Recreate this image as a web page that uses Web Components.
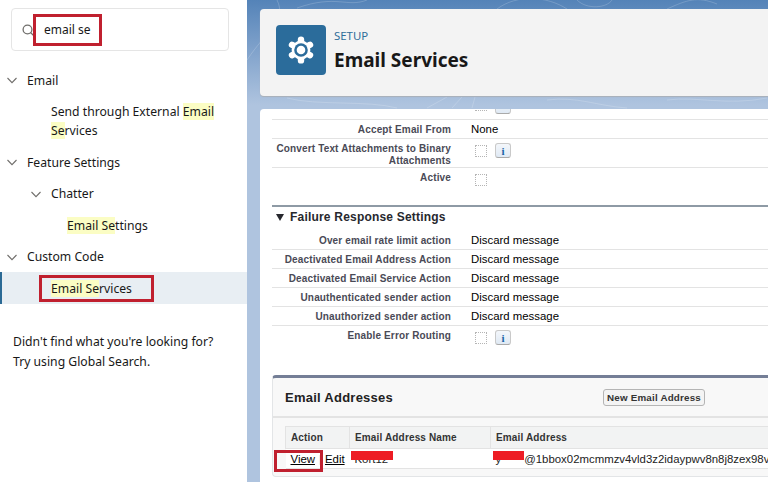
<!DOCTYPE html>
<html lang="en">
<head>
<meta charset="utf-8">
<title>Email Services</title>
<style>
    html, body { margin: 0; height: 100%; overflow: hidden; }
    body { font-family: "Noto Sans", "Liberation Sans", sans-serif; color: #181818; }
</style>
</head>
<body>
<setup-page>
    <side-nav slot="side">
        <search-box value="email se"></search-box>
        <nav-row level="0" caret>Email</nav-row>
        <nav-row level="1">Send through External <hl-text>Email</hl-text> <hl-text>Se</hl-text>rvices</nav-row>
        <nav-row level="0" caret>Feature Settings</nav-row>
        <nav-row level="1" caret>Chatter</nav-row>
        <nav-row level="2"><hl-text>Email Se</hl-text>ttings</nav-row>
        <nav-row level="0" caret>Custom Code</nav-row>
        <nav-row level="1" active><hl-text>Email Se</hl-text>rvices</nav-row>
        <nav-empty>Didn't find what you're looking for?<br>Try using Global Search.</nav-empty>
    </side-nav>
    <page-header slot="main" kicker="SETUP" title="Email Services"></page-header>
    <detail-card slot="main">
        <detail-stub></detail-stub>
        <detail-row label="Accept Email From">None</detail-row>
        <detail-row label="Convert Text Attachments to Binary Attachments"><check-box></check-box><info-btn></info-btn></detail-row>
        <detail-row label="Active" tall last><check-box></check-box></detail-row>
        <section-head>Failure Response Settings</section-head>
        <detail-row label="Over email rate limit action">Discard message</detail-row>
        <detail-row label="Deactivated Email Address Action">Discard message</detail-row>
        <detail-row label="Deactivated Email Service Action">Discard message</detail-row>
        <detail-row label="Unauthenticated sender action">Discard message</detail-row>
        <detail-row label="Unauthorized sender action">Discard message</detail-row>
        <detail-row label="Enable Error Routing" last><check-box></check-box><info-btn></info-btn></detail-row>
        <related-list></related-list>
    </detail-card>
    <red-box slot="over" style="left:33px;top:14px;width:63px;height:26px"></red-box>
    <red-box slot="over" style="left:39px;top:275px;width:109px;height:21px"></red-box>
    <red-box slot="over" style="left:274px;top:450px;width:43px;height:16px"></red-box>
</setup-page>

<script>
class SetupPage extends HTMLElement {
    constructor() {
        super();
        this.attachShadow({ mode: "open" });
        this.shadowRoot.innerHTML = `
            <style>
                :host { display: grid; grid-template-columns: 247px 1fr; width: 768px; height: 482px; overflow: hidden; position: relative; background: #fff; }
                .main { position: relative; overflow: hidden; padding: 9px 0 0 13px; background: linear-gradient(#5483b8 0, #80a2cb 50px, #afc4df 105px, #afc4df 100%); }
                .topo { position: absolute; left: 0; top: 0; }
                ::slotted(page-header), ::slotted(detail-card) { position: relative; }
            </style>
            <slot name="side"></slot>
            <div class="main">
                <svg class="topo" width="521" height="110" fill="none" stroke="#fff" stroke-opacity=".18">
                    <path d="M0 60C20 30 40 20 30 0M50 8C90 -6 100 8 120 0M250 9C270 -6 300 -4 320 9M330 0C340 10 360 8 365 0M420 9C440 0 450 -4 470 4"/>
                    <path d="M40 98C70 106 120 100 150 108M180 108L200 97M205 108L215 97M225 108L228 97M300 100C330 96 350 106 380 108M420 100C450 96 480 106 520 98"/>
                </svg>
                <slot name="main"></slot>
            </div>
            <slot name="over"></slot>
        `;
    }
}

class SideNav extends HTMLElement {
    constructor() {
        super();
        this.attachShadow({ mode: "open" });
        this.shadowRoot.innerHTML = `
            <style>
                :host { display: block; background: #fff; font-size: 12.2px; color: #181818; }
            </style>
            <slot></slot>
        `;
    }
}

class SearchBox extends HTMLElement {
    constructor() {
        super();
        this.attachShadow({ mode: "open" });
    }

    connectedCallback() {
        this.shadowRoot.innerHTML = `
            <style>
                :host { display: block; padding: 8px 18px 13px 11px; }
                .box { display: flex; align-items: center; gap: 9px; height: 41px; padding-left: 10px; border: 1px solid #e5e5e5; border-radius: 4px; }
                span { font-size: 12px; color: #181818; }
                svg { flex: none; margin-top: 2px; }
            </style>
            <div class="box">
                <svg width="13" height="13" viewBox="0 0 13 13" fill="none" stroke="#706e6b" stroke-width="1.3">
                    <circle cx="5.5" cy="5.5" r="4.4"/><path d="M8.8 8.8L12.4 12.4"/>
                </svg>
                <span>${this.getAttribute("value")}</span>
            </div>
        `;
    }
}

class NavRow extends HTMLElement {
    constructor() {
        super();
        this.attachShadow({ mode: "open" });
    }

    connectedCallback() {
        const level = Number(this.getAttribute("level"));
        const caret = this.hasAttribute("caret");
        // text sits at 27, 51, 67 depending on the depth
        const textLeft = [27, 51, 67][level];
        const active = this.hasAttribute("active");
        this.shadowRoot.innerHTML = `
            <style>
                :host { display: flex; position: relative; padding: 6.5px 20px 6px ${textLeft}px; line-height: 19px; ${active ? "background: #e8eef3; box-shadow: inset 2px 0 0 #2b6a95;" : ""} }
                svg { position: absolute; left: ${textLeft - 20}px; top: 13px; }
            </style>
            ${caret ? `<svg width="10" height="7" viewBox="0 0 10 7" fill="none" stroke="#706e6b" stroke-width="1.1"><path d="M.5 1L5 5.6L9.5 1"/></svg>` : ""}
            <div><slot></slot></div>
        `;
    }
}

class HlText extends HTMLElement {
    constructor() {
        super();
        this.attachShadow({ mode: "open" });
        // no whitespace around the slot, it would show up inside the sentence
        this.shadowRoot.innerHTML = `<style>:host { display: inline; background: #fbfdc4; }</style><slot></slot>`;
    }
}

class NavEmpty extends HTMLElement {
    constructor() {
        super();
        this.attachShadow({ mode: "open" });
        this.shadowRoot.innerHTML = `
            <style>:host { display: block; padding: 28px 13px 0; line-height: 20px; }</style>
            <slot></slot>
        `;
    }
}

class PageHeader extends HTMLElement {
    constructor() {
        super();
        this.attachShadow({ mode: "open" });
    }

    connectedCallback() {
        this.shadowRoot.innerHTML = `
            <style>
                :host { display: flex; gap: 8px; height: 87px; box-sizing: border-box; padding: 16px; margin-bottom: 13px; background: #f3f3f3; border-radius: 4px 0 0 4px; box-shadow: 0 1px 1px #a9b0b8; }
                .icon { flex: none; display: flex; align-items: center; justify-content: center; width: 50px; height: 50px; background: #2b6c9b; border-radius: 4px; }
                .kicker { margin-top: 3px; font-size: 11.4px; line-height: 16px; color: #2f6d99; }
                h1 { margin: 0; margin-top: 4px; font-size: 19px; line-height: 24px; font-weight: 700; color: #181818; }
            </style>
            <div class="icon">
                <svg width="28" height="28" viewBox="0 0 28 28">
                    <g stroke="#fff" stroke-width="6.4" stroke-linecap="round">
                        <path d="M14 14V3.600M14 14V24.400M14 14L23 8.800M14 14L23 19.200M14 14L5 8.800M14 14L5 19.200"/>
                    </g>
                    <circle cx="14" cy="14" r="9.400" fill="#fff"/>
                    <circle cx="14" cy="14" r="6.800" fill="#2b6c9b"/>
                    <circle cx="14" cy="14" r="4.300" fill="#fff"/>
                </svg>
            </div>
            <div>
                <div class="kicker">${this.getAttribute("kicker")}</div>
                <h1>${this.getAttribute("title")}</h1>
            </div>
        `;
    }
}

class DetailCard extends HTMLElement {
    constructor() {
        super();
        this.attachShadow({ mode: "open" });
        this.shadowRoot.innerHTML = `
            <style>
                :host { display: block; height: 373px; padding-left: 12px; background: #fff; border-radius: 4px 0 0 0; font-family: "Liberation Sans", Arial, sans-serif; overflow: hidden; }
            </style>
            <slot></slot>
        `;
    }
}

class DetailStub extends HTMLElement {
    constructor() {
        super();
        this.attachShadow({ mode: "open" });
        // the row scrolled under the header: only the bottom of its controls shows
        this.shadowRoot.innerHTML = `
            <style>
                :host { display: flex; align-items: flex-end; height: 10px; padding-left: 203px; border-bottom: 1px solid #e3e3e3; overflow: hidden; }
                div { display: flex; gap: 8px; margin-bottom: 5px; }
            </style>
            <div><check-box></check-box><info-btn blank></info-btn></div>
        `;
    }
}

class DetailRow extends HTMLElement {
    constructor() {
        super();
        this.attachShadow({ mode: "open" });
    }

    connectedCallback() {
        const last = this.hasAttribute("last");
        const tall = this.hasAttribute("tall");
        this.shadowRoot.innerHTML = `
            <style>
                :host { display: grid; grid-template-columns: 179px 1fr; column-gap: 20px; min-height: 18px; ${last ? "" : "border-bottom: 1px solid #e3e3e3;"} ${tall ? "height: 37px;" : ""} }
                .label { padding: 4px 0 0 2px; text-align: right; font-size: 10px; line-height: 12px; font-weight: 700; color: #4a4a56; letter-spacing: .15px; }
                .value { display: flex; align-items: flex-start; gap: 8px; padding: 3px 0 2px 0; font-size: 11.4px; line-height: 13px; color: #000; }
                ::slotted(check-box) { margin: 3px 0 0 4px; }
                ::slotted(info-btn) { margin-top: 1px; }
            </style>
            <div class="label">${this.getAttribute("label")}</div>
            <div class="value"><slot></slot></div>
        `;
    }
}

class CheckBox extends HTMLElement {
    constructor() {
        super();
        this.attachShadow({ mode: "open" });
        this.shadowRoot.innerHTML = `
            <style>:host { display: block; flex: none; width: 10px; height: 10px; border: 1px dotted #b5b5b5; }</style>
        `;
    }
}

class InfoBtn extends HTMLElement {
    constructor() {
        super();
        this.attachShadow({ mode: "open" });
        this.shadowRoot.innerHTML = `
            <style>
                :host { display: flex; flex: none; align-items: center; justify-content: center; width: 14px; height: 13px; border: 1px solid #c9c9c9; border-bottom-color: #aaa; border-radius: 3px; background: linear-gradient(#f4f7fb, #dfe9f4); font: 700 11px "Liberation Serif", serif; color: #1a64a8; }
            </style>
            ${this.hasAttribute("blank") ? "" : "i"}
        `;
    }
}

class SectionHead extends HTMLElement {
    constructor() {
        super();
        this.attachShadow({ mode: "open" });
        this.shadowRoot.innerHTML = `
            <style>
                :host { display: flex; align-items: center; gap: 6px; height: 14px; padding: 3px 0 7px 4px; border-top: 2px solid #8e9aa5; font-size: 12px; line-height: 14px; font-weight: 700; color: #27282e; letter-spacing: .2px; }
                i { width: 0; height: 0; border: 4.5px solid transparent; border-top: 7px solid #27282e; border-bottom: 0; }
            </style>
            <i></i><slot></slot>
        `;
    }
}

class RelatedList extends HTMLElement {
    constructor() {
        super();
        this.attachShadow({ mode: "open" });
        this.shadowRoot.innerHTML = `
            <style>
                :host { display: block; margin-top: 28px; height: 102px; box-sizing: border-box; background: #f8f8f8; border: 1px solid #e3e5e7; border-top: 3px solid #747e96; border-right: 0; border-radius: 4px 0 0 4px; }
                .head { display: grid; grid-template-columns: 318px auto; align-items: center; box-sizing: border-box; height: 40px; padding: 0 0 0 12px; border-bottom: 2px solid #e3e3e3; }
                h3 { margin: 0; font-size: 13px; font-weight: 700; color: #222; letter-spacing: .25px; }
                button { justify-self: start; height: 17px; width: 102px; padding: 0; border: 1px solid #b5b5b5; border-radius: 3px; background: #f4f4f4; font: 700 9.8px "Liberation Sans", sans-serif; color: #333; letter-spacing: .2px; }
                table { margin: 8px 0 0 12px; width: 700px; border-collapse: collapse; table-layout: fixed; }
                th { height: 21px; padding: 0 0 0 5px; text-align: left; background: #f2f3f3; border: 1px solid #e3e3e3; font-size: 10px; font-weight: 700; color: #333; letter-spacing: .15px; }
                td { height: 19px; padding: 0 0 0 5px; background: #fff; border-bottom: 1px solid #e3e3e3; font-size: 11.4px; color: #222; white-space: nowrap; overflow: hidden; position: relative; }
                a { color: #000; text-decoration: underline; }
                .sep { color: #ddd; margin: 0 3.5px; }
                .redact { position: absolute; top: 2px; height: 9px; background: #ed1c24; }
            </style>
            <div class="head">
                <h3>Email Addresses</h3>
                <button>New Email Address</button>
            </div>
            <table>
                <colgroup><col style="width:64px"><col style="width:141px"><col></colgroup>
                <tr><th>Action</th><th>Email Address Name</th><th>Email Address</th></tr>
                <tr>
                    <td><a>View</a><span class="sep">|</span><a>Edit</a></td>
                    <td>Kort12<span class="redact" style="left:1px;width:42px"></span></td>
                    <td>y<span style="display:inline-block;width:23px"></span>@1bbox02mcmmzv4vld3z2idaypwv8n8j8zex98v<span class="redact" style="left:2px;width:31px"></span></td>
                </tr>
            </table>
        `;
    }
}

class RedBox extends HTMLElement {
    constructor() {
        super();
        this.attachShadow({ mode: "open" });
        this.shadowRoot.innerHTML = `
            <style>:host { display: block; position: absolute; border: 3px solid #c0202f; }</style>
        `;
    }
}

customElements.define("setup-page", SetupPage);
customElements.define("side-nav", SideNav);
customElements.define("search-box", SearchBox);
customElements.define("nav-row", NavRow);
customElements.define("hl-text", HlText);
customElements.define("nav-empty", NavEmpty);
customElements.define("page-header", PageHeader);
customElements.define("detail-card", DetailCard);
customElements.define("detail-stub", DetailStub);
customElements.define("detail-row", DetailRow);
customElements.define("check-box", CheckBox);
customElements.define("info-btn", InfoBtn);
customElements.define("section-head", SectionHead);
customElements.define("related-list", RelatedList);
customElements.define("red-box", RedBox);
</script>
</body>
</html>
